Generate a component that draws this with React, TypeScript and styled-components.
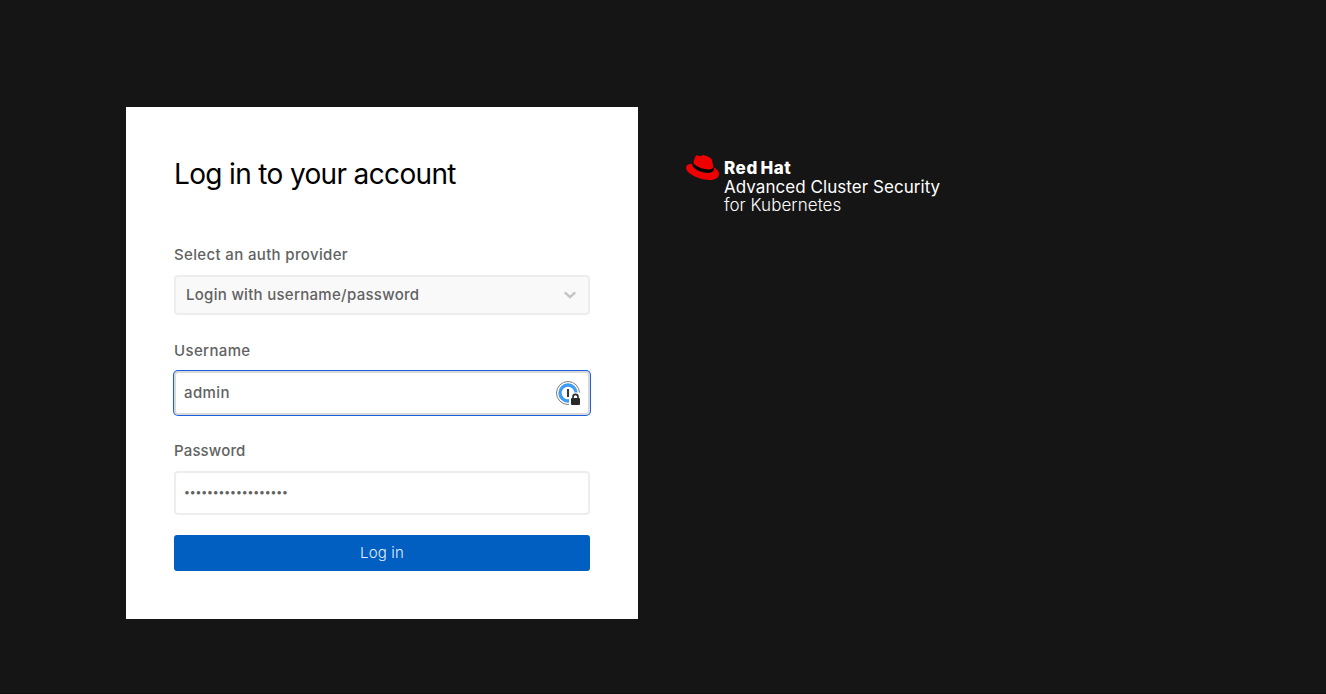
import React from 'react';
import styled, { createGlobalStyle } from 'styled-components';
import { FaRedhat } from 'react-icons/fa';

const GlobalStyle = createGlobalStyle`
  *, *::before, *::after { box-sizing: border-box; }
  body {
    margin: 0;
    background: #151515;
    font-family: Inter, "Liberation Sans", sans-serif;
  }
`;

const Page = styled.main`
  display: flex;
  align-items: flex-start;
  gap: 48px;
  height: 694px;
  padding: 107px 126px 0;
  background: #151515;
  border-bottom: 1px solid #100c0d;
  overflow: hidden;
`;

const Card = styled.form`
  width: 512px;
  height: 512px;
  padding: 48px;
  background: #fff;
  flex: none;
`;

const Title = styled.h1`
  margin: 0 0 50px;
  height: 38px;
  line-height: 38px;
  font-size: 28px;
  font-weight: 400;
  letter-spacing: -0.65px;
  color: #000;
  white-space: nowrap;
`;

const Field = styled.div<{ $gap: number }>`
  margin-bottom: ${(p) => p.$gap}px;
`;

const Label = styled.label<{ $spacing: number }>`
  display: block;
  height: 24px;
  margin-bottom: 8px;
  line-height: 24px;
  font-size: 15px;
  font-weight: 500;
  letter-spacing: ${(p) => p.$spacing}px;
  color: #626262;
`;

const Select = styled.div`
  display: flex;
  align-items: center;
  justify-content: space-between;
  height: 40px;
  padding: 0 11px 2px 10px;
  border: 2px solid #ededed;
  border-radius: 4px;
  background: #f9f9f9;
  font-size: 15px;
  font-weight: 500;
  letter-spacing: 0.29px;
  color: #626262;
`;

const InputFrame = styled.div<{ $focused?: boolean }>`
  display: flex;
  align-items: center;
  height: 44px;
  padding: 0 7px 0 8px;
  border: 2px solid ${(p) => (p.$focused ? '#d9d9d9' : '#ededed')};
  border-radius: 4px;
  background: #fff;
  box-shadow: ${(p) => (p.$focused ? '0 0 0 1px #1a5fe0' : 'none')};
`;

const Input = styled.input<{ $spacing?: number }>`
  flex: 1;
  min-width: 0;
  height: 38px;
  padding: 0 0 2px;
  border: 0;
  outline: 0;
  background: transparent;
  font: 500 15px/24px Inter, "Liberation Sans", sans-serif;
  letter-spacing: ${(p) => p.$spacing ?? 0}px;
  color: #626262;
`;

const PasswordInput = styled(Input)`
  font-size: 11px;
  padding-bottom: 3px;
`;

const Submit = styled.button`
  display: block;
  width: 100%;
  height: 36px;
  padding: 0;
  border: 0;
  border-radius: 3px;
  background: #005fc1;
  color: #e3edf8;
  font: 300 15px/36px Inter, "Liberation Sans", sans-serif;
  letter-spacing: 0.15px;
`;

const Brand = styled.div`
  display: flex;
  gap: 5px;
  padding-top: 48px;
  color: #fff;
`;

const HatMark = styled.div`
  position: relative;
  width: 33px;
  height: 26px;
  color: #e00;
`;

const HatBand = styled.svg`
  position: absolute;
  left: 0;
  top: -4px;
  width: 33px;
  height: 33px;
`;

const HatShape = styled(FaRedhat)`
  position: absolute;
  left: 0;
  top: -4px;
  width: 33px;
  height: 33px;
`;

const BrandText = styled.div`
  display: flex;
  flex-direction: column;
  padding-top: 4px;
`;

const BrandLine = styled.span<{ $weight: number; $spacing: number; $wordSpacing?: number }>`
  height: 18.7px;
  line-height: 18.7px;
  font-size: 17px;
  font-weight: ${(p) => p.$weight};
  letter-spacing: ${(p) => p.$spacing}px;
  word-spacing: ${(p) => p.$wordSpacing ?? 0}px;
  white-space: nowrap;
`;

const Chevron = () => (
  <svg width="14" height="10" viewBox="0 0 14 10" fill="none" stroke="#c4c4c4" strokeWidth="2.4">
    <path d="M1.8 3.4 7 8.2 12.2 3.4" />
  </svg>
);

const PasswordManagerIcon = () => (
  <svg width="26" height="26" viewBox="0 0 26 26" fill="none">
    <circle cx="13" cy="13" r="11.5" fill="#fff" stroke="#7d7d7d" />
    <circle cx="13" cy="13" r="8" stroke="#3d9cf4" strokeWidth="3.3" />
    <path d="M13 9v8" stroke="#3a3a3a" strokeWidth="2" />
    <path d="M14 26v-9l2.4-4.6h8.2L26 16v10z" fill="#fff" />
    <path d="M18 19v-2.1a2.5 2.5 0 0 1 5 0V19" stroke="#292929" strokeWidth="1.6" />
    <rect x="16" y="18" width="9" height="7" rx="1" fill="#292929" />
  </svg>
);

export default function App() {
  return (
    <>
      <GlobalStyle />
      <Page>
        <Card onSubmit={(e) => e.preventDefault()}>
          <Title>Log in to your account</Title>
          <Field $gap={24}>
            <Label $spacing={0.35}>Select an auth provider</Label>
            <Select>
              Login with username/password
              <Chevron />
            </Select>
          </Field>
          <Field $gap={24}>
            <Label $spacing={0.35} htmlFor="username">Username</Label>
            <InputFrame $focused>
              <Input id="username" defaultValue="admin" $spacing={0.4} />
              <PasswordManagerIcon />
            </InputFrame>
          </Field>
          <Field $gap={20}>
            <Label $spacing={0.15} htmlFor="password">Password</Label>
            <InputFrame>
              <PasswordInput id="password" type="password" defaultValue="administrator-pass" $spacing={-0.1} />
            </InputFrame>
          </Field>
          <Submit type="submit">Log in</Submit>
        </Card>
        <Brand>
          <HatMark>
            <HatBand viewBox="0 0 512 512">
              <path d="M100 170 L420 250 L432 300 Q400 340 300 325 Q160 300 88 225 Z" fill="#000" />
            </HatBand>
            <HatShape />
          </HatMark>
          <BrandText>
            <BrandLine $weight={800} $spacing={0.55} $wordSpacing={-1.6}>Red Hat</BrandLine>
            <BrandLine $weight={400} $spacing={0.05}>Advanced Cluster Security</BrandLine>
            <BrandLine $weight={300} $spacing={0.05}>for Kubernetes</BrandLine>
          </BrandText>
        </Brand>
      </Page>
    </>
  );
}
